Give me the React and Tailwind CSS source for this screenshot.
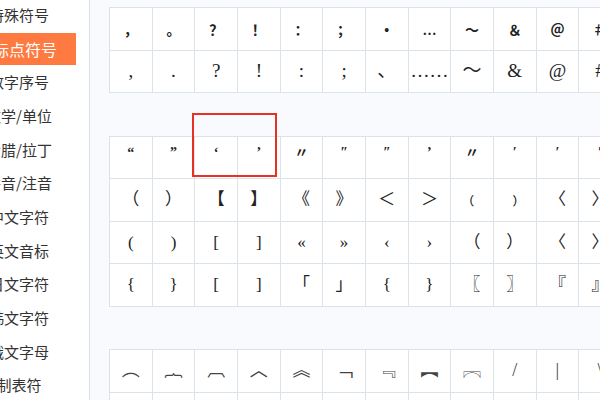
import React from "react";

// Left-hand category list (the panel is scrolled so the first glyph is clipped)
const categories = [
  "特殊符号",
  "标点符号",
  "数字序号",
  "数学/单位",
  "希腊/拉丁",
  "拼音/注音",
  "中文字符",
  "英文音标",
  "日文字符",
  "韩文字符",
  "俄文字母",
  "制表符",
];

const tableOne = [
  ["，", "。", "？", "！", "：", "；", "•", "…", "～", "＆", "＠", "＃", "￥", "％"],
  [",", ".", "?", "!", ":", ";", "、", "……", "〜", "&", "@", "#", "$", "%"],
];

const tableTwo = [
  ["“", "”", "‘", "’", "〃", "″", "″", "’", "〃", "′", "′", "′", "‵", "‶"],
  ["（", "）", "【", "】", "《", "》", "＜", "＞", "﹙", "﹚", "〈", "〉", "﹛", "﹜"],
  ["(", ")", "[", "]", "«", "»", "‹", "›", "（", "）", "〈", "〉", "⟨", "⟩"],
  ["{", "}", "[", "]", "「", "」", "{", "}", "〖", "〗", "『", "』", "〘", "〙"],
];

const tableThree = [
  ["︵", "︷", "︹", "︿", "︽", "﹁", "﹃", "︻", "︗", "/", "|", "\\", "︙", "︰"],
  ["︶", "︸", "︺", "﹀", "︾", "﹂", "﹄", "︼", "︘", "\\", "|", "/", "︱", "︳"],
];

const SymbolTable = ({ rows, cellClass = "", rowClasses = [] }) => (
  <div className="border-l border-t border-[#dce2ea] bg-white w-max">
    {rows.map((row, r) => (
      <div key={r} className="flex">
        {row.map((sym, c) => (
          <div
            key={c}
            className={`w-[42.67px] h-[42.5px] shrink-0 border-r border-b border-[#dce2ea] flex items-center justify-center text-[#222] ${cellClass} ${rowClasses[r] || ""}`}
            style={{ fontFamily: '"Liberation Serif", "Noto Sans CJK SC", serif' }}
          >
            {sym}
          </div>
        ))}
      </div>
    ))}
  </div>
);

export default function App() {
  return (
    <div
      className="w-[600px] h-[400px] overflow-hidden flex bg-[#f8fafd]"
      style={{ fontFamily: '"Noto Sans CJK SC", "Noto Sans", sans-serif' }}
    >
      {/* Sidebar */}
      <div className="w-[90px] shrink-0 h-full bg-white border-r border-[#dcdfe4] overflow-hidden">
        <div className="flex flex-col gap-[1.7px] -mt-[1px] -ml-[38px]">
          {categories.map((name, i) =>
            i === 1 ? (
              <div
                key={name}
                className="h-[32px] w-[114px] bg-[#ff7a40] text-white text-[16px] flex items-center justify-center pl-[12px] whitespace-nowrap"
              >
                {name}
              </div>
            ) : (
              <div
                key={name}
                className="h-[32px] w-[114px] text-[#333] text-[15px] flex items-center justify-center whitespace-nowrap"
              >
                {name}
              </div>
            )
          )}
        </div>
      </div>

      {/* Symbol tables */}
      <div className="flex-1 overflow-hidden pl-[19px] pt-[7px] flex flex-col gap-[42.5px]">
        <SymbolTable
          rows={tableOne}
          rowClasses={["text-[14px] font-bold pt-[4px]", "text-[19px]"]}
        />

        <div className="relative">
          <SymbolTable
            rows={tableTwo}
            rowClasses={["text-[14px] font-bold pb-[10px]", "text-[17px]", "text-[17px]", "text-[17px]"]}
          />
          {/* red highlight frame */}
          <div className="absolute left-[83px] top-[-23px] w-[85px] h-[64px] border-2 border-[#e53222]" />
        </div>

        <SymbolTable rows={tableThree} cellClass="text-[18px] text-[#444]" />
      </div>
    </div>
  );
}
